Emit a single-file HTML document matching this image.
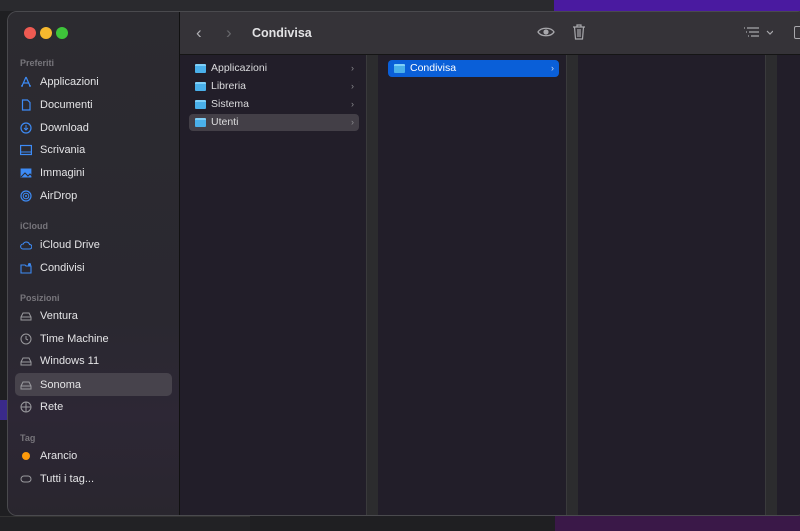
<!DOCTYPE html>
<html><head><meta charset="utf-8"><style>
*{margin:0;padding:0;box-sizing:border-box}
body{width:800px;height:531px;overflow:hidden;background:#1f1f22;font-family:"Liberation Sans",sans-serif;position:relative}
.abs{position:absolute}
.win{left:7px;top:11px;width:800px;height:505px;border-radius:10px;overflow:hidden;background:#221e29;border:1px solid #4a4a4e}
.side{left:0;top:0;width:172px;height:505px;background:linear-gradient(180deg,#2c2b30 0%,#2a2830 60%,#2d2735 80%,#29262e 100%);border-right:1px solid #111}
.tb{left:172px;top:0;width:630px;height:43px;background:#353338;border-bottom:1px solid #151515}
.dot{width:12px;height:12px;border-radius:50%;top:15px}
.hd{font-size:9px;color:#77757b;font-weight:bold;left:12px}
.it{left:12px;font-size:11px;color:#e4e4e6;height:22px;line-height:22px;display:flex;align-items:center}
.it svg{width:12px;height:12px;margin-right:8px}
.row{font-size:10.5px;color:#dcdcde;height:17px;line-height:17px;display:flex;align-items:center;padding-left:6px;border-radius:4px}
.fold{width:11px;height:9px;background:#4ab0ea;border-radius:1px;margin-right:5px;border-top:2px solid #7fd0f8}
.chev{position:absolute;right:5px;color:#8a8a8e;font-size:9px}
.strip{top:43px;width:12px;height:462px;background:#2c2c2e;border-left:1px solid #3a3a3c}
</style></head><body>
<div class="abs" style="left:0;top:0;width:800px;height:11px;background:#2a2a2e"></div>
<div class="abs" style="left:554px;top:0;width:246px;height:11px;background:#4a1aa0"></div>
<div class="abs" style="left:555px;top:516px;width:245px;height:15px;background:#3a1848"></div>
<div class="abs" style="left:0;top:516px;width:250px;height:15px;background:#222225;border-top:1px solid #333"></div>
<div class="abs" style="left:0;top:400px;width:7px;height:20px;background:#3a2a8a"></div>
<div class="abs win">
 <div class="abs side">
  <div class="abs dot" style="left:16px;background:#ee5a52"></div>
  <div class="abs dot" style="left:32px;background:#f5b82e"></div>
  <div class="abs dot" style="left:48px;background:#3ec53a"></div>
  <div class="abs hd" style="top:46px">Preferiti</div>
  <div class="abs it" style="top:59px"><svg viewBox="0 0 12 12"><path d="M6 1L2 10M6 1l4 9M3 7h6M1 10h2M9 10h2" stroke="#3d8bf5" fill="none" stroke-width="1.2"/></svg>Applicazioni</div>
  <div class="abs it" style="top:82px"><svg viewBox="0 0 12 12"><path d="M2.5 1h5l2.5 2.5V11h-7.5z" stroke="#3d8bf5" fill="none" stroke-width="1.2"/></svg>Documenti</div>
  <div class="abs it" style="top:105px"><svg viewBox="0 0 12 12"><circle cx="6" cy="6" r="5" stroke="#3d8bf5" fill="none" stroke-width="1.2"/><path d="M6 3v5M4 6l2 2 2-2" stroke="#3d8bf5" fill="none"/></svg>Download</div>
  <div class="abs it" style="top:127px"><svg viewBox="0 0 12 12"><rect x="0.6" y="1.5" width="10.8" height="9" stroke="#3d8bf5" fill="none" stroke-width="1.2"/><path d="M1 8h10" stroke="#3d8bf5"/></svg>Scrivania</div>
  <div class="abs it" style="top:150px"><svg viewBox="0 0 12 12"><rect x="0.6" y="1.5" width="10.8" height="9" fill="#3d8bf5"/><path d="M1 10l4-4 3 3 2-2 2 2" stroke="#2c2b30" fill="none"/></svg>Immagini</div>
  <div class="abs it" style="top:173px"><svg viewBox="0 0 12 12"><circle cx="6" cy="6" r="5" stroke="#3d8bf5" fill="none" stroke-width="1.2"/><circle cx="6" cy="6" r="2.8" stroke="#3d8bf5" fill="none"/><circle cx="6" cy="6" r="1" fill="#3d8bf5"/></svg>AirDrop</div>
  <div class="abs hd" style="top:209px">iCloud</div>
  <div class="abs it" style="top:222px"><svg viewBox="0 0 12 12"><path d="M3 10h6.5a2.3 2.3 0 0 0 0-4.6A3.3 3.3 0 0 0 3.3 5 2.5 2.5 0 0 0 3 10z" stroke="#3d8bf5" fill="none" stroke-width="1.1"/></svg>iCloud Drive</div>
  <div class="abs it" style="top:245px"><svg viewBox="0 0 12 12"><path d="M1 3h4l1 1h5v7H1z" stroke="#3d8bf5" fill="none" stroke-width="1.1"/><circle cx="9.5" cy="2.5" r="1.5" fill="#3d8bf5"/></svg>Condivisi</div>
  <div class="abs hd" style="top:281px">Posizioni</div>
  <div class="abs it" style="top:293px"><svg viewBox="0 0 12 12"><path d="M1 7l2-4h6l2 4v3H1z" stroke="#9a9a9e" fill="none"/><path d="M1 7h10" stroke="#9a9a9e"/></svg>Ventura</div>
  <div class="abs it" style="top:316px"><svg viewBox="0 0 12 12"><circle cx="6" cy="6" r="5" stroke="#9a9a9e" fill="none"/><path d="M6 3v3l2 1" stroke="#9a9a9e" fill="none"/></svg>Time Machine</div>
  <div class="abs it" style="top:338px"><svg viewBox="0 0 12 12"><path d="M1 7l2-4h6l2 4v3H1z" stroke="#9a9a9e" fill="none"/><path d="M1 7h10" stroke="#9a9a9e"/></svg>Windows 11</div>
  <div class="abs" style="left:7px;top:361px;width:157px;height:23px;border-radius:5px;background:#47434c"></div>
  <div class="abs it" style="top:362px"><svg viewBox="0 0 12 12"><path d="M1 7l2-4h6l2 4v3H1z" stroke="#9a9a9e" fill="none"/><path d="M1 7h10" stroke="#9a9a9e"/></svg>Sonoma</div>
  <div class="abs it" style="top:384px"><svg viewBox="0 0 12 12"><circle cx="6" cy="6" r="5" stroke="#9a9a9e" fill="none"/><path d="M1 6h10M6 1v10" stroke="#9a9a9e"/></svg>Rete</div>
  <div class="abs hd" style="top:421px">Tag</div>
  <div class="abs it" style="top:433px"><svg viewBox="0 0 12 12"><circle cx="6" cy="6" r="4" fill="#fd9a0a"/></svg>Arancio</div>
  <div class="abs it" style="top:456px"><svg viewBox="0 0 12 12"><rect x="1" y="3" width="10" height="6" rx="3" stroke="#9a9a9e" fill="none"/></svg>Tutti i tag...</div>
 </div>
 <div class="abs tb">
  <div class="abs" style="left:16px;top:11px;color:#b0b0b4;font-size:17px">&#8249;</div>
  <div class="abs" style="left:46px;top:11px;color:#68686c;font-size:17px">&#8250;</div>
  <div class="abs" style="left:72px;top:14px;color:#e2e2e4;font-size:12.5px;font-weight:bold">Condivisa</div>
  <svg class="abs" style="left:357px;top:14px" width="18" height="12" viewBox="0 0 18 12"><path d="M1 6C4 1 14 1 17 6 14 11 4 11 1 6z" stroke="#a8a8ac" fill="none" stroke-width="1.3"/><circle cx="9" cy="6" r="2.6" fill="#a8a8ac"/></svg>
  <svg class="abs" style="left:392px;top:12px" width="14" height="16" viewBox="0 0 14 16"><path d="M1 3h12M5 3V1h4v2M2.5 3l1 12h7l1-12M6 5v8M8 5v8" stroke="#a8a8ac" fill="none" stroke-width="1.2"/></svg>
  <svg class="abs" style="left:563px;top:15px" width="30" height="12" viewBox="0 0 30 12"><path d="M1 1h1M4 1h12M3 5h1M6 5h10M5 9h1M8 9h8M24 4l3 3 3-3" stroke="#a8a8ac" fill="none" stroke-width="1.2"/></svg>
  <div class="abs" style="left:614px;top:14px;width:12px;height:13px;border:1.3px solid #a8a8ac;border-radius:2px"></div>
 </div>
 <div class="abs" style="left:173px;top:43px;width:186px;height:462px;background:#221e29">
  <div class="abs row" style="left:8px;top:5px;width:170px"><span class="fold"></span>Applicazioni<span class="chev">›</span></div>
  <div class="abs row" style="left:8px;top:23px;width:170px"><span class="fold"></span>Libreria<span class="chev">›</span></div>
  <div class="abs row" style="left:8px;top:41px;width:170px"><span class="fold"></span>Sistema<span class="chev">›</span></div>
  <div class="abs row" style="left:8px;top:59px;width:170px;background:#433f47"><span class="fold"></span>Utenti<span class="chev">›</span></div>
 </div>
 <div class="abs strip" style="left:358px"></div>
 <div class="abs row" style="left:380px;top:48px;width:171px;background:#0a5fd8;color:#fff"><span class="fold"></span>Condivisa<span class="chev" style="color:#c8d8f5">›</span></div>
 <div class="abs strip" style="left:558px"></div>
 <div class="abs strip" style="left:757px"></div>
</div>
</body></html>
